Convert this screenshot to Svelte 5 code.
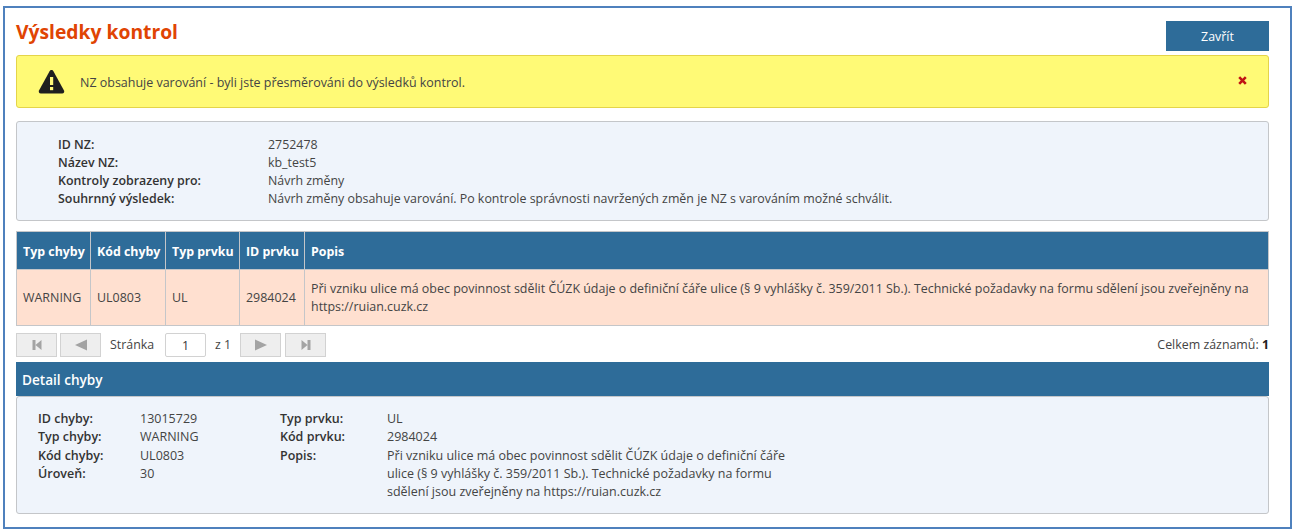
<script>
	const info = [
		['ID NZ:', '2752478'],
		['Název NZ:', 'kb_test5'],
		['Kontroly zobrazeny pro:', 'Návrh změny'],
		['Souhrnný výsledek:', 'Návrh změny obsahuje varování. Po kontrole správnosti navržených změn je NZ s varováním možné schválit.']
	];
	const detailLeft = [
		['ID chyby:', '13015729'],
		['Typ chyby:', 'WARNING'],
		['Kód chyby:', 'UL0803'],
		['Úroveň:', '30']
	];
	const detailRight = [
		['Typ prvku:', 'UL'],
		['Kód prvku:', '2984024'],
		['Popis:', 'Při vzniku ulice má obec povinnost sdělit ČÚZK údaje o definiční čáře ulice (§ 9 vyhlášky č. 359/2011 Sb.). Technické požadavky na formu sdělení jsou zveřejněny na https://ruian.cuzk.cz']
	];
</script>

<div class="frame">
	<div class="top">
		<h1>Výsledky kontrol</h1>
		<button class="close">Zavřít</button>
	</div>

	<div class="alert">
		<svg class="warn" width="27" height="25" viewBox="0 0 27 25">
			<path d="M13.5 1 C12.6 1 12 1.5 11.6 2.2 L1 21.5 C0.3 22.9 1.1 24.5 2.8 24.5 L24.2 24.5 C25.9 24.5 26.7 22.9 26 21.5 L15.4 2.2 C15 1.5 14.4 1 13.5 1 Z" fill="#1f1f1f"/>
			<rect x="12" y="8" width="3.2" height="8" fill="#fff97a"/>
			<rect x="12" y="18" width="3.2" height="3.2" fill="#fff97a"/>
		</svg>
		<span class="alert-text">NZ obsahuje varování - byli jste přesměrováni do výsledků kontrol.</span>
		<svg class="x" width="9" height="9" viewBox="0 0 9 9">
			<path d="M1.2 1.2 L7.8 7.8 M7.8 1.2 L1.2 7.8" stroke="#c01414" stroke-width="2.6"/>
		</svg>
	</div>

	<div class="panel info">
		{#each info as [k, v]}
			<div class="k">{k}</div>
			<div class="v">{v}</div>
		{/each}
	</div>

	<table>
		<thead>
			<tr>
				<th class="c1">Typ chyby</th>
				<th class="c2">Kód chyby</th>
				<th class="c3">Typ prvku</th>
				<th class="c4">ID prvku</th>
				<th>Popis</th>
			</tr>
		</thead>
		<tbody>
			<tr>
				<td>WARNING</td>
				<td>UL0803</td>
				<td>UL</td>
				<td>2984024</td>
				<td>Při vzniku ulice má obec povinnost sdělit ČÚZK údaje o definiční čáře ulice (§ 9 vyhlášky č. 359/2011 Sb.). Technické požadavky na formu sdělení jsou zveřejněny na https://ruian.cuzk.cz</td>
			</tr>
		</tbody>
	</table>

	<div class="pager">
		<button class="pg" aria-label="first">
			<svg width="12" height="12" viewBox="0 0 12 12"><path d="M1.5 1h3v10h-3z M4.5 6 L10.5 1 V11 Z" fill="#a3a3a3"/></svg>
		</button>
		<button class="pg" aria-label="previous">
			<svg width="12" height="12" viewBox="0 0 12 12"><path d="M0 6 L12 0.5 V11.5 Z" fill="#a3a3a3"/></svg>
		</button>
		<span class="lbl">Stránka</span>
		<input class="page-input" value="1" />
		<span class="of">z 1</span>
		<button class="pg" aria-label="next">
			<svg width="12" height="12" viewBox="0 0 12 12"><path d="M12 6 L0 0.5 V11.5 Z" fill="#a3a3a3"/></svg>
		</button>
		<button class="pg last" aria-label="last">
			<svg width="12" height="12" viewBox="0 0 12 12"><path d="M10.5 1h-3v10h3z M7.5 6 L1.5 1 V11 Z" fill="#a3a3a3"/></svg>
		</button>
		<span class="total">Celkem záznamů: <b>1</b></span>
	</div>

	<div class="detail-head">Detail chyby</div>
	<div class="panel detail">
		<div class="dl left">
			{#each detailLeft as [k, v]}
				<div class="k">{k}</div>
				<div class="v">{v}</div>
			{/each}
		</div>
		<div class="dl right">
			{#each detailRight as [k, v]}
				<div class="k">{k}</div>
				<div class="v">{v}</div>
			{/each}
		</div>
	</div>
</div>

<style>
	:global(body) {
		background: #fff;
		font-family: "Open Sans", "Noto Sans", sans-serif;
		font-size: 12.4px;
		color: #444;
	}

	.frame {
		box-sizing: border-box;
		margin: 6px 1px 0 3px;
		width: 1289px;
		height: 523px;
		border: 2px solid #4f81bd;
		padding: 13px 21px 0 11px;
		line-height: 18px;
	}

	.top {
		display: flex;
		justify-content: space-between;
		height: 34px;
	}

	h1 {
		margin: 1px 0 0;
		font-size: 19.3px;
		line-height: 20px;
		font-weight: 700;
		color: #e04403;
	}

	.close {
		width: 103px;
		height: 30px;
		border: 0;
		background: #2e6c99;
		color: #fff;
		font: inherit;
		padding: 2px 0 0;
	}

	.alert {
		box-sizing: border-box;
		display: flex;
		align-items: center;
		height: 53px;
		background: #fffa76;
		border: 1px solid #e4d44a;
		border-radius: 3px;
		padding: 0 21px;
	}

	.alert-text {
		margin-left: 15px;
		flex: 1;
		padding-top: 2px;
		font-size: 12.47px;
	}

	.x {
		margin-bottom: 3px;
	}

	.panel {
		box-sizing: border-box;
		background: #eff4fb;
		border: 1px solid #c4c6c9;
		border-radius: 3px;
	}

	.k {
		font-weight: 600;
		color: #333;
	}

	.info {
		display: grid;
		grid-template-columns: 210px 1fr;
		align-content: start;
		margin-top: 13px;
		height: 100px;
		padding: 14px 0 0 41px;
	}

	table {
		box-sizing: border-box;
		width: 100%;
		margin-top: 10px;
		border-collapse: collapse;
		border: 1px solid #c4c6c9;
		table-layout: fixed;
	}

	th {
		box-sizing: border-box;
		background: #2e6c99;
		color: #fff;
		font-weight: 700;
		text-align: left;
		height: 38px;
		padding: 2px 6px 0;
		border-left: 1px solid #c4c6c9;
		white-space: nowrap;
	}

	th:first-child, td:first-child {
		border-left: 0;
	}

	.c1 { width: 74px; }
	.c2 { width: 75px; }
	.c3 { width: 74px; }
	.c4 { width: 65px; }

	td {
		background: #ffe0d0;
		height: 56px;
		padding: 0 6px;
		border-left: 1px solid #c4c6c9;
		border-top: 1px solid #c4c6c9;
		box-sizing: border-box;
		line-height: 18px;
		font-size: 12.44px;
	}

	.pager {
		display: flex;
		align-items: center;
		height: 24px;
		margin-top: 7px;
	}

	.pg {
		box-sizing: border-box;
		width: 41px;
		height: 24px;
		padding: 0;
		margin-right: 3px;
		background: #eee;
		border: 1px solid #d2d2d2;
		display: flex;
		align-items: center;
		justify-content: center;
	}

	.pg.last {
		margin-left: 1px;
	}

	.lbl {
		margin-left: 6px;
		width: 55px;
	}

	.page-input {
		box-sizing: border-box;
		width: 41px;
		height: 24px;
		padding: 0;
		border: 1px solid #d2d2d2;
		border-radius: 2px;
		text-align: center;
		font: inherit;
		color: #333;
		outline: 0;
	}

	.of {
		margin-left: 9px;
		width: 25px;
	}

	.total {
		margin-left: auto;
	}

	.total b {
		color: #222;
	}

	.detail-head {
		box-sizing: border-box;
		height: 34px;
		margin-top: 5px;
		background: #2e6c99;
		color: #fff;
		font-size: 13.6px;
		font-weight: 600;
		line-height: 35px;
		padding-left: 6px;
	}

	.detail {
		display: flex;
		height: 118px;
		padding: 13px 0 0 21px;
	}

	.dl {
		display: grid;
		align-content: start;
		grid-auto-rows: min-content;
		line-height: 18.3px;
		font-size: 12.5px;
	}

	.left {
		grid-template-columns: 102px 140px;
	}

	.right {
		grid-template-columns: 107px 405px;
	}
</style>
